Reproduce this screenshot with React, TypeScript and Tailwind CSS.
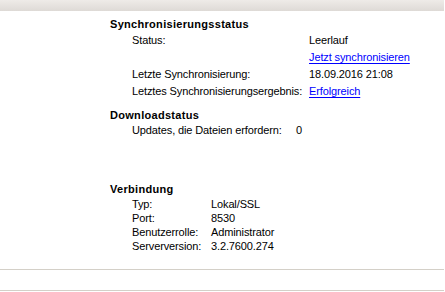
import React from 'react'

const font = "font-['Tahoma','Liberation_Sans',Arial,sans-serif]"

// One label/value line of a status section
function Row({ label, value, link, labelW, h }: { label: string; value: string; link?: boolean; labelW: string; h: string }) {
  return (
    <div className={`flex pl-[22px] tracking-[-0.12px] ${h}`}>
      <span className={`${labelW} shrink-0`}>{label}</span>
      <span className={link ? 'text-[#0000ff] underline underline-offset-[2px]' : ''}>{value}</span>
    </div>
  )
}

function App(): JSX.Element {
  return (
    <div className={`w-[445px] h-[292px] bg-white text-black text-[11px] overflow-hidden ${font}`}>
      <div className="h-[11px] w-[444px] bg-gradient-to-b from-[#eeebe8] to-[#dedad6]" />

      <div className="pl-[110px] pt-[5px]">
        <div className="font-bold leading-[16px] tracking-[0.3px]">Synchronisierungsstatus</div>
        <Row h="leading-[17px]" labelW="w-[177px]" label="Status:" value="Leerlauf" />
        <Row h="leading-[17px]" labelW="w-[177px]" label="" value="Jetzt synchronisieren" link />
        <Row h="leading-[17px]" labelW="w-[177px]" label="Letzte Synchronisierung:" value="18.09.2016 21:08" />
        <Row h="leading-[17px]" labelW="w-[177px]" label="Letztes Synchronisierungsergebnis:" value="Erfolgreich" link />

        <div className="font-bold leading-[16px] tracking-[0.3px] mt-[7px]">Downloadstatus</div>
        <Row h="leading-[15px]" labelW="w-[164px]" label="Updates, die Dateien erfordern:" value="0" />

        <div className="font-bold leading-[16px] tracking-[0.3px] mt-[43px]">Verbindung</div>
        <Row h="leading-[14px]" labelW="w-[79px]" label="Typ:" value="Lokal/SSL" />
        <Row h="leading-[14px]" labelW="w-[79px]" label="Port:" value="8530" />
        <Row h="leading-[14px]" labelW="w-[79px]" label="Benutzerrolle:" value="Administrator" />
        <Row h="leading-[14px]" labelW="w-[79px]" label="Serverversion:" value="3.2.7600.274" />
      </div>

      <div className="mt-[16px] w-[444px] border-t border-[#d4d0c8]" />
      <div className="mt-[20px] w-[444px] border-t border-[#d4d0c8]" />
    </div>
  )
}

export default App
